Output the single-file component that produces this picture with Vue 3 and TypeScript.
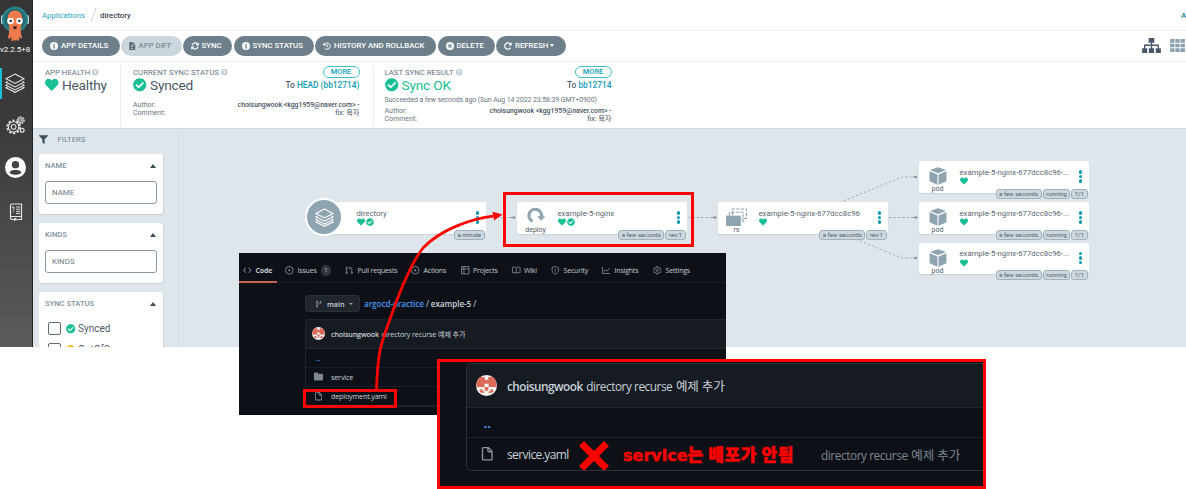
<script setup lang="ts">
import { h, type FunctionalComponent } from 'vue'

interface Glyph {
  box: string
  fill?: string
  line?: string
  width?: number
}

const glyphs: Record<string, Glyph> = {
  heart: { box: '0 0 512 512', fill: 'M462.3 62.6C407.5 15.9 326 24.3 275.7 76.2L256 96.5l-19.7-20.3C186.1 24.3 104.5 15.9 49.7 62.6c-62.8 53.6-66.1 149.8-9.9 207.9l193.5 199.8c12.5 12.9 32.8 12.9 45.3 0l193.5-199.8c56.3-58.1 53-154.3-9.8-207.9z' },
  check: { box: '0 0 512 512', fill: 'M504 256c0 136.967-111.033 248-248 248S8 392.967 8 256 119.033 8 256 8s248 111.033 248 248zM227.314 387.314l184-184c6.248-6.248 6.248-16.379 0-22.627l-22.627-22.627c-6.248-6.249-16.379-6.249-22.628 0L216 308.118l-70.059-70.059c-6.248-6.248-16.379-6.248-22.628 0l-22.627 22.627c-6.248 6.248-6.248 16.379 0 22.627l104 104c6.249 6.249 16.379 6.249 22.628.001z' },
  info: { box: '0 0 16 16', fill: 'M8 0a8 8 0 1 0 0 16A8 8 0 0 0 8 0zM6.8 3h2.6v2.4H6.800zM6 6.700h3.400v4.600h1v1.700H6v-1.700h1V8.400H6z' },
  question: { box: '0 0 16 16', fill: 'M8 0a8 8 0 1 0 0 16A8 8 0 0 0 8 0zM7 11h2v2H7zM5 6a3 3 0 1 1 4.200 2.700L9 10H7V8C7 7 9 7 9 6a1 1 0 0 0-2 0z' },
  diff: { box: '0 0 12 16', fill: 'M1 0h6v5h5v10a1 1 0 0 1-1 1H1a1 1 0 0 1-1-1V1a1 1 0 0 1 1-1zM8 0l4 4H8zM5 6v1.500H3.500V9H5v1.500h1.500V9H8V7.500H6.500V6zM3.500 12v1.400H8V12z' },
  sync: { box: '0 0 16 16', line: 'M2 6.500A6.300 6.300 0 0 1 13 4.200M14 9.500A6.300 6.300 0 0 1 3 11.800', fill: 'M15.500 .5v6.300H9.200zM.5 15.500V9.200h6.300z', width: 2.3 },
  history: { box: '0 0 16 16', line: 'M2.800 4.800A6.300 6.300 0 1 1 3 12M8 4.500V8.500l2.600 1.800', fill: 'M.5 .8v6.200h6.200z', width: 2 },
  remove: { box: '0 0 16 16', fill: 'M8 0a8 8 0 1 0 0 16A8 8 0 0 0 8 0zM5.800 4.200 8 6.400l2.200-2.200 1.600 1.600L9.600 8l2.200 2.200-1.600 1.600L8 9.600l-2.200 2.200-1.600-1.600L6.400 8 4.200 5.800z' },
  redo: { box: '0 0 16 16', line: 'M13 4.600A6.300 6.300 0 1 0 13.200 11.500', fill: 'M15.500 .5v6.500H9z', width: 2.4 },
  funnel: { box: '0 0 16 16', fill: 'M.7 0h14.600c.7 0 1 .8.500 1.300L10 7.300V16l-4-3V7.300L.2 1.300C-.3.800 0 0 .7 0z' },
  tree: { box: '0 0 20 16', fill: 'M7 0h6v5H7zM0 11h5.500v5H0zM7.250 11h5.500v5h-5.500zM14.500 11H20v5h-5.500zM9.300 5h1.400v2h7.300v4h-1.400V8.400H10.700V11H9.300V8.400H3.400V11H2V7h7.300z' },
  grid: { box: '0 0 17 15', fill: 'M0 0h5v4.200H0zM6 0h5v4.200H6zM12 0h5v4.200h-5zM0 5.400h5v4.200H0zM6 5.400h5v4.200H6zM12 5.400h5v4.200h-5zM0 10.800h5V15H0zM6 10.800h5V15H6zM12 10.800h5V15h-5z' },
  layers: { box: '0 0 20 20', line: 'M10 1 19 5.700 10 10.500 1 5.700ZM2.500 8.400 1 9.200l9 4.700 9-4.700-1.500-.8M2.500 11.400 1 12.200l9 4.700 9-4.700-1.500-.8M2.500 14 1 14.700l9 4.600 9-4.600-1.500-.7', width: 1.1 },
  code: { box: '0 0 16 16', fill: 'M4.720 3.220a.75.75 0 011.060 1.060L2.060 8l3.720 3.720a.75.75 0 11-1.060 1.060L.47 8.530a.75.75 0 010-1.060l4.250-4.250zm6.560 0a.75.75 0 10-1.060 1.060L13.940 8l-3.720 3.720a.75.75 0 101.060 1.060l4.250-4.250a.75.75 0 000-1.060l-4.250-4.250z' },
  issue: { box: '0 0 16 16', line: 'M8 .8a7.200 7.200 0 1 0 0 14.400A7.200 7.200 0 0 0 8 .8z', fill: 'M8 6.300a1.700 1.700 0 1 0 0 3.400 1.700 1.700 0 0 0 0-3.400z', width: 1.5 },
  pull: { box: '0 0 16 16', line: 'M3.200 5v6M3.200 1.800a1.500 1.500 0 1 0 0 3 1.500 1.500 0 0 0 0-3zM3.200 11.200a1.500 1.500 0 1 0 0 3 1.500 1.500 0 0 0 0-3zM12.800 11.200a1.500 1.500 0 1 0 0 3 1.500 1.500 0 0 0 0-3zM12.800 11V5.500a2 2 0 0 0-2-2H8M10 1 7.600 3.500 10 6', width: 1.5 },
  play: { box: '0 0 16 16', line: 'M8 .8a7.200 7.200 0 1 0 0 14.400A7.200 7.200 0 0 0 8 .8z', fill: 'M6.300 5 11.200 8l-4.900 3z', width: 1.5 },
  table: { box: '0 0 16 16', line: 'M1 1h14v14H1zM1 5.500h14M5.500 1v14', width: 1.5 },
  book: { box: '0 0 16 16', line: 'M8 3.500C7 2.300 6 2 4.500 2H.8v10.500h4C6.500 12.500 7.300 13 8 14c.7-1 1.500-1.500 3.200-1.500h4V2h-3.700C10 2 9 2.300 8 3.500zM8 3.500V14', width: 1.4 },
  shield: { box: '0 0 16 16', line: 'M8 .8 14 2.800V7.500c0 3.800-2.200 6.200-6 7.700-3.800-1.500-6-3.900-6-7.700V2.800zM8 4.500V8.500M8 10v1.600', width: 1.5 },
  graph: { box: '0 0 16 16', line: 'M1 1.500V14h14.500M3.500 10.500 6.500 7l3 2.500 5-5.500', width: 1.5 },
  gear: { box: '0 0 16 16', line: 'M6.600 1h2.800l.5 2 1.500.8 2-.6 1.500 2.500L13.500 7.200v1.600l1.400 1.500-1.500 2.500-2-.6-1.500.8-.5 2H6.600l-.5-2-1.500-.8-2 .6-1.500-2.500 1.400-1.500V7.200L1.100 5.700l1.500-2.500 2 .6L6.100 3zM8 5.700a2.300 2.300 0 1 0 0 4.600 2.300 2.300 0 0 0 0-4.600z', width: 1.4 },
  branch: { box: '0 0 16 16', fill: 'M11.750 2.500a.75.75 0 100 1.500.75.75 0 000-1.500zm-2.250.75a2.250 2.250 0 113 2.122V6A2.500 2.500 0 0110 8.500H6a1 1 0 00-1 1v1.128a2.251 2.251 0 11-1.500 0V5.372a2.250 2.250 0 111.500 0v1.836A2.492 2.492 0 016 7h4a1 1 0 001-1v-.628A2.250 2.250 0 019.500 3.250zM4.250 12a.75.75 0 100 1.500.75.75 0 000-1.500zM3.500 3.250a.75.75 0 111.500 0 .75.75 0 01-1.500 0z' },
  file: { box: '0 0 16 16', fill: 'M3.750 1.500a.25.25 0 00-.25.25v11.500c0 .138.112.25.25.25h8.500a.25.25 0 00.25-.25V6H9.750A1.750 1.750 0 018 4.250V1.500H3.750zm5.750.56v2.190c0 .138.112.25.25.25h2.190L9.500 2.060zM2 1.750C2 .784 2.784 0 3.750 0h5.086c.464 0 .909.184 1.237.513l3.414 3.414c.329.328.513.773.513 1.237v8.086A1.750 1.750 0 0112.250 15h-8.500A1.750 1.750 0 012 13.250V1.750z' },
  folder: { box: '0 0 16 16', fill: 'M1.700 1h4.500l1.700 2h6.400c1 0 1.700.8 1.700 1.700v8.600c0 1-.8 1.700-1.700 1.700H1.700C.8 15 0 14.200 0 13.300V2.700C0 1.800.8 1 1.700 1z' },
  deploy: { box: '0 0 20 20', line: 'M6.200 14.800A7 7 0 1 1 16 10', fill: 'M11.200 9.300H20.300L15.800 14.300z', width: 3.6 },
  cube: { box: '0 0 20 20', fill: 'M10 .3 19 3.400 10 6.900 1 3.400zM.6 4.800 9.400 8.200V19.800L.6 15.800zM19.400 4.800 10.600 8.200V19.800l8.800-4z' }
}

const Icon: FunctionalComponent<{ name: string }> = (props) => {
  const g = glyphs[props.name]
  return h('svg', { viewBox: g.box, class: 'icon' }, [
    g.fill ? h('path', { d: g.fill, fill: 'currentColor', 'fill-rule': 'evenodd' }) : null,
    g.line ? h('path', { d: g.line, fill: 'none', stroke: 'currentColor', 'stroke-width': g.width }) : null
  ])
}
Icon.props = ['name']

const Avatar: FunctionalComponent = () =>
  h('svg', { viewBox: '0 0 20 20', class: 'ava' }, [
    h('circle', { cx: 10, cy: 10, r: 10, fill: '#f5f2f0' }),
    h('path', {
      d: 'M4 2H8.300V4.600H11.700V2H16A10 10 0 0 1 19.400 11.500H12V8.300H8V11.500H.6A10 10 0 0 1 4 2zM8.300 11.500H11.700V15H8.300zM4 13.500H6.200V15.500H8V16.800H4.500L2.800 14.800H4zM16 13.500H13.800V15.500H12V16.800H15.500L17.200 14.800H16z',
      fill: '#db6a58'
    })
  ])

const buttons = [
  { icon: 'info', label: 'APP DETAILS', cls: 'b-details' },
  { icon: 'diff', label: 'APP DIFF', cls: 'b-diff' },
  { icon: 'sync', label: 'SYNC', cls: 'b-sync' },
  { icon: 'info', label: 'SYNC STATUS', cls: 'b-status' },
  { icon: 'history', label: 'HISTORY AND ROLLBACK', cls: 'b-history' },
  { icon: 'remove', label: 'DELETE', cls: 'b-delete' },
  { icon: 'redo', label: 'REFRESH', cls: 'b-refresh' }
]

const nodes = [
  { cls: 'n-app', kind: 'app', name: 'directory', synced: true, tags: ['a minute'] },
  { cls: 'n-deploy', kind: 'deploy', name: 'example-5-nginx', synced: true, tags: ['a few seconds', 'rev:1'] },
  { cls: 'n-rs', kind: 'rs', name: 'example-5-nginx-677dcc8c96', synced: false, tags: ['a few seconds', 'rev:1'] },
  { cls: 'n-pod1', kind: 'pod', name: 'example-5-nginx-677dcc8c96-...', synced: false, tags: ['a few seconds', 'running', '1/1'] },
  { cls: 'n-pod2', kind: 'pod', name: 'example-5-nginx-677dcc8c96-...', synced: false, tags: ['a few seconds', 'running', '1/1'] },
  { cls: 'n-pod3', kind: 'pod', name: 'example-5-nginx-677dcc8c96-...', synced: false, tags: ['a few seconds', 'running', '1/1'] }
]

const tabs = [
  { icon: 'code', label: 'Code' },
  { icon: 'issue', label: 'Issues', count: 1 },
  { icon: 'pull', label: 'Pull requests' },
  { icon: 'play', label: 'Actions' },
  { icon: 'table', label: 'Projects' },
  { icon: 'book', label: 'Wiki' },
  { icon: 'shield', label: 'Security' },
  { icon: 'graph', label: 'Insights' },
  { icon: 'gear', label: 'Settings' }
]
</script>

<template>
  <div class="stage">
    <div class="argo">
      <aside class="side">
        <svg class="logo" viewBox="0 0 33 42">
          <rect x="1" y="15" width="3" height="9" rx="1.500" fill="#b9dbe8" />
          <rect x="26" y="15" width="3" height="9" rx="1.500" fill="#b9dbe8" />
          <circle cx="15" cy="19.500" r="13" fill="#2b7f86" />
          <circle cx="15" cy="19.500" r="10.500" fill="#20686f" />
          <path d="M15 10.500c-5 0-7.500 4-7.300 8.500.2 5 2 7 1.500 12.500-.1 3-1.500 5-1 7 2 .5 2.500-.5 3-2l.4 4.500c1.600.8 2.300-.5 2.400-1.700.6 2 2.300 2 2.700-.1.500 2 2 1.800 2.500.6l-.1-3.600c.8 2 1.800 2.600 3 1.800-1-3-1.400-5.500-1.300-8 0-4 1.600-7 1.600-11 0-5-2.900-8.500-7.400-8.500z" fill="#ef7b4d" />
          <circle cx="10.500" cy="21" r="3.300" fill="#fff" />
          <circle cx="19.500" cy="21" r="3.300" fill="#fff" />
          <circle cx="10.700" cy="21" r="1.200" fill="#222" />
          <circle cx="19.300" cy="21" r="1.200" fill="#222" />
          <path d="M13 26.500c.5 3.500 3.500 3.500 4 0z" fill="#2a1512" />
        </svg>
        <div class="version">v2.2.5+8</div>
        <div class="side-item active"><Icon name="layers" /></div>
        <svg class="gears" viewBox="0 0 20 20" fill="none" stroke="#dcdcdc">
          <circle cx="8" cy="11.500" r="6.700" stroke-width="2" stroke-dasharray="2.400 1.800" />
          <circle cx="8" cy="11.500" r="5.500" stroke-width="1.200" />
          <circle cx="8" cy="11.500" r="2.500" stroke-width="1.200" />
          <circle cx="15.500" cy="4.500" r="3.500" stroke-width="1.500" stroke-dasharray="1.600 1" />
          <circle cx="15.500" cy="4.500" r="2.500" />
          <circle cx="15.500" cy="4.500" r=".9" />
          <circle cx="17" cy="15" r="2" stroke-width="1.400" />
        </svg>
        <svg class="user" viewBox="0 0 20 20">
          <circle cx="10" cy="10" r="10" fill="#fff" />
          <circle cx="10" cy="7.300" r="3.500" fill="#444" />
          <path d="M4.300 15.200c1-2.800 3-2.900 5.700-2.900s4.700.1 5.700 2.900c-3 2.200-8.400 2.200-11.400 0z" fill="#444" />
        </svg>
        <svg class="docs" viewBox="0 0 14 18" fill="none" stroke="#e6e6e6">
          <path d="M1.500 15V2.500A1.500 1.500 0 0 1 3 1h9.500v12.500H3a1.500 1.500 0 0 0 0 3h2M8 16.500h4.500v-3" stroke-width="1.200" />
          <path d="M7 4h4M7 6.200h4M7 8.400h4M7 10.500h4M3.300 5c0-1.700 2-1.300 2 0 0 .9-1 .9-1 2M4.300 8v1" stroke-width=".9" />
          <path d="M5 15.200h2.500V18l-1.200-1L5 18z" fill="#fff" stroke="none" />
        </svg>
      </aside>

      <main class="main">
        <header class="crumbs">
          <a>Applications</a>
          <svg class="slash" viewBox="0 0 7 14"><path d="M6 0 1 14" stroke="#ccd6dc" fill="none" /></svg>
          <b>directory</b>
          <span class="corner">A</span>
        </header>

        <div class="toolbar">
          <button v-for="b in buttons" :key="b.label" :class="['btn', b.cls]">
            <Icon :name="b.icon" /><span>{{ b.label }}</span><i v-if="b.icon === 'redo'" class="caret" />
          </button>
          <div class="views"><Icon name="tree" class="v-tree" /><Icon name="grid" class="v-grid" /></div>
        </div>

        <section class="status">
          <div class="panel p-health">
            <div class="cap">APP HEALTH <Icon name="question" /></div>
            <div class="big"><Icon name="heart" /><span>Healthy</span></div>
          </div>
          <div class="panel p-current">
            <div class="cap">CURRENT SYNC STATUS <Icon name="question" /><span class="more">MORE</span></div>
            <div class="big"><Icon name="check" /><span>Synced</span><span class="to">To <a>HEAD (bb12714)</a></span></div>
            <div class="meta first"><span>Author:</span><span class="who">choisungwook &lt;kgg1959@naver.com&gt; -</span></div>
            <div class="meta"><span>Comment:</span><span class="who">fix: 육자</span></div>
          </div>
          <div class="panel p-last">
            <div class="cap">LAST SYNC RESULT <Icon name="question" /><span class="more">MORE</span></div>
            <div class="big ok"><Icon name="check" /><span>Sync OK</span><span class="to">To <a>bb12714</a></span></div>
            <div class="when">Succeeded a few seconds ago (Sun Aug 14 2022 23:58:39 GMT+0900)</div>
            <div class="meta"><span>Author:</span><span class="who">choisungwook &lt;kgg1959@naver.com&gt; -</span></div>
            <div class="meta"><span>Comment:</span><span class="who">fix: 육자</span></div>
          </div>
        </section>

        <div class="body">
          <div class="filters">
            <div class="f-title"><Icon name="funnel" /><span>FILTERS</span></div>
            <div v-for="f in ['NAME', 'KINDS']" :key="f" class="f-card">
              <div class="f-head"><span>{{ f }}</span><i class="up" /></div>
              <div class="f-input">{{ f }}</div>
            </div>
            <div class="f-card tall">
              <div class="f-head"><span>SYNC STATUS</span><i class="up" /></div>
              <div class="f-row"><i class="box" /><Icon name="check" /><span>Synced</span></div>
              <div class="f-row"><i class="box" /><i class="warn" /><span>OutOfSync</span></div>
            </div>
          </div>

          <div class="canvas">
            <svg class="edges" viewBox="0 0 1007 219">
              <g fill="none" stroke="#a3afb7" stroke-width="1" stroke-dasharray="2.400 2">
                <path d="M308 88.500H337M509 88.500H538M710 88.500H739" />
                <path d="M624 88.500 723 48H739M624 88.500 723 129H739" />
              </g>
              <g fill="#8c99a2">
                <path d="m331 88.500 5-1.500v3zM532 88.500l5-1.500v3zM733 88.500l5-1.500v3zM733 48l5-1.500v3zM733 129l5-1.500v3z" />
              </g>
            </svg>
            <div v-for="n in nodes" :key="n.cls" :class="['node', n.cls]">
              <div v-if="n.kind === 'app'" class="disc"><Icon name="layers" /></div>
              <div v-else class="kind">
                <Icon v-if="n.kind === 'deploy'" name="deploy" />
                <Icon v-else-if="n.kind === 'pod'" name="cube" />
                <svg v-else class="icon rs-icon" viewBox="0 0 24 20">
                  <path d="M8 7.500V1h14.500v10H17" fill="none" stroke="#8fa4b1" stroke-width="1.200" stroke-dasharray="3.500 1.500" />
                  <path d="M4.500 8V4.500H19V15h-2" fill="none" stroke="#8fa4b1" stroke-width="1.200" stroke-dasharray="3.500 1.500" />
                  <path d="M1 8h15.500v11H1z" fill="#8fa4b1" />
                </svg>
                <span>{{ n.kind }}</span>
              </div>
              <div class="info">
                <span class="nm">{{ n.name }}</span>
                <span class="st"><Icon name="heart" /><Icon v-if="n.synced" name="check" /></span>
              </div>
              <div class="dots"><i /><i /><i /></div>
              <div class="tags"><span v-for="t in n.tags" :key="t">{{ t }}</span></div>
            </div>
          </div>
        </div>
      </main>
    </div>

    <div class="repo">
      <nav class="tabs">
        <div v-for="t in tabs" :key="t.label" :class="['tab', { on: t.icon === 'code' }]">
          <Icon :name="t.icon" /><span>{{ t.label }}</span><em v-if="t.count">{{ t.count }}</em>
        </div>
      </nav>
      <div class="path">
        <div class="br"><Icon name="branch" /><span>main</span><i class="caret" /></div>
        <div class="trail"><a>argocd-practice</a> / <b>example-5</b> /</div>
      </div>
      <div class="files">
        <div class="commit">
          <Avatar />
          <b>choisungwook</b><span>directory recurse 예제 추가</span>
        </div>
        <div class="f up-dir">..</div>
        <div class="f"><Icon name="folder" /><span>service</span></div>
        <div class="f"><Icon name="file" /><span>deployment.yaml</span></div>
      </div>
    </div>

    <div class="mark m-node" />
    <div class="mark m-file" />
    <svg class="arrow" viewBox="0 0 1186 489">
      <path d="M376.500 389C378 350 381 344 389 322C400 290 412 262 423 248C440 230 470 219 493 216.200" fill="none" stroke="#f00" stroke-width="2.800" />
      <path d="M502.500 214.500 492.500 211.700 494 220.500z" fill="#f00" />
    </svg>

    <div class="inset">
      <div class="sheet">
        <div class="commit">
          <Avatar />
          <b>choisungwook</b><span>directory recurse <span class="ko">예제 추가</span></span>
        </div>
        <div class="row up-dir">..</div>
        <div class="row">
          <Icon name="file" />
          <span class="fname">service.yaml</span>
          <svg class="cross" viewBox="0 0 30 30"><path d="M2.500 2.500 27.500 27.500M27.500 2.500 2.500 27.500" stroke="#f00" stroke-width="7" /></svg>
          <strong><span class="lat">service</span>는 배포가 안됨</strong>
          <span class="msg">directory recurse <span class="ko">예제 추가</span></span>
        </div>
      </div>
    </div>
  </div>
</template>

<style>
body { background: #fff; }
</style>

<style scoped>
.stage { position: relative; width: 1186px; height: 489px; overflow: hidden; background: #fff; font-family: Roboto, "Noto Sans CJK KR", sans-serif; font-size: 7.75px; color: #495763; }
.icon { display: block; flex: none; overflow: visible; }
i { font-style: normal; }
.argo { display: flex; height: 347px; overflow: hidden; }

.side { width: 33px; box-sizing: border-box; border-right: 1px solid #222; flex: none; background: linear-gradient(#353535, #3c3c3c 40%, #5b5b5b); display: flex; flex-direction: column; align-items: center; overflow: hidden; }
.logo { width: 33px; height: 42px; flex: none; }
.version { height: 14px; line-height: 16px; font-size: 7.900px; color: #fff; width: 30px; overflow: hidden; white-space: nowrap; font-weight: 400; align-self: flex-start; }
.side-item { width: 32px; height: 31px; margin-top: 12px; box-sizing: border-box; padding: 5px 0 0 5px; color: #e4e4e4; }
.side-item.active { border-left: 2px solid #18bcd4; padding-left: 3px; }
.side-item .icon { width: 20px; height: 20px; }
.gears { width: 19px; height: 19px; margin: 17px 2px 0 0; flex: none; }
.user { width: 21px; height: 21px; margin: 22px 2px 0 0; flex: none; }
.docs { width: 14px; height: 18px; margin: 25px 1px 0 0; flex: none; }

.main { flex: 1; min-width: 0; display: flex; flex-direction: column; }
.crumbs { height: 30px; border-bottom: 1px solid #eef1f4; display: flex; align-items: center; padding-left: 9px; background: #fff; }
.crumbs a { color: #1fa3b8; width: 47.500px; }
.slash { width: 7px; height: 14px; margin-right: 3.500px; }
.crumbs b { font-weight: 500; color: #363c4a; font-size: 7.800px; }
.corner { margin-left: auto; width: 5px; overflow: hidden; color: #1b7d93; font-weight: 500; font-size: 8px; }
.toolbar { height: 30px; border-bottom: 1px solid #eef1f4; display: flex; align-items: center; padding-left: 9px; }
.btn { height: 20.500px; border: 0; border-radius: 11px; background: #6d7f8b; color: #fff; font: 500 7.800px Roboto, sans-serif; display: flex; align-items: center; padding: 0 0 1px 8px; margin: 0 1.500px 0 0; gap: 3px; white-space: nowrap; box-sizing: border-box; flex: none; }
.btn .icon { width: 8px; height: 8px; }
.b-details { width: 77.500px; }
.b-diff { width: 60.500px; background: #ccd6dd; color: #7b8a94; margin-right: 1px; }
.b-diff .icon { width: 6.500px; color: #5b6b76; }
.b-sync { width: 49.500px; }
.b-status { width: 80px; }
.b-history { width: 121px; }
.b-delete { width: 57px; }
.b-refresh { width: 70px; }
.caret { border: 2.500px solid transparent; border-top: 3px solid currentColor; border-bottom: 0; width: 0; height: 0; margin-left: -1px; }
.views { margin-left: auto; display: flex; align-items: center; gap: 9px; padding: 0 1px 1px 0; color: #46586a; }
.v-tree { width: 19px; height: 15px; }
.v-grid { width: 15px; height: 13px; color: #8ba0b1; }

.status { height: 66.500px; display: flex; box-sizing: border-box; padding: 3px 0 3px 0; background: #fff; }
.panel { box-sizing: border-box; border-right: 1.500px solid #e9eef2; line-height: 9px; padding-top: 2px; }
.p-health { width: 88px; padding-left: 12px; }
.p-current { width: 252.500px; padding: 2px 13px 0 12px; }
.p-last { width: 248px; border: 0; padding: 2px 10px 0 11px; }
.cap { display: flex; align-items: center; height: 10px; color: #67757f; font-size: 7.800px; white-space: nowrap; gap: 2px; }
.cap .icon { width: 6.500px; height: 6.500px; color: #c3d0d8; }
.more { margin-left: auto; border: 1px solid #3fc0cf; border-radius: 7px; width: 37px; height: 12px; box-sizing: border-box; color: #0fa3b8; font-weight: 500; font-size: 7.500px; text-align: center; line-height: 10.500px; }
.big { display: flex; align-items: center; height: 16px; font-size: 13.700px; color: #495763; gap: 3.500px; letter-spacing: -.2px; margin-bottom: 1px; }
.big .icon { width: 13.500px; height: 13.500px; color: #18be94; }
.big.ok { color: #18be94; }
.to { margin-left: auto; font-size: 8.350px; font-weight: 500; letter-spacing: 0; color: #4f5c67; }
.to a { color: #109db3; }
.meta { display: flex; justify-content: space-between; height: 8px; line-height: 8px; font-size: 7px; color: #6a767f; white-space: nowrap; }
.meta.first { margin-top: 8.200px; }
.who { font-size: 6.850px; color: #47525c; font-weight: 500; }
.meta:last-child .who { font-weight: 400; font-size: 7.200px; }
.when { height: 12.500px; line-height: 13px; font-size: 6.950px; color: #6a767f; white-space: nowrap; letter-spacing: -.08px; }

.body { flex: 1; display: flex; background: #dee6eb; border-top: 1px solid #cfd8de; margin-top: -1px; min-height: 0; }
.filters { width: 146px; box-sizing: border-box; padding: 0 15px 0 6px; border-right: 1px solid #d5dee4; flex: none; overflow: hidden; color: #748592; }
.f-title { height: 25px; display: flex; align-items: center; gap: 9.500px; padding-bottom: 3px; box-sizing: border-box; }
.f-title .icon { width: 9px; height: 9.500px; color: #3c4c59; }
.f-card { background: #fff; border-radius: 3px; box-shadow: .5px 1px 1px #c9d2d8; height: 60px; margin-bottom: 9px; box-sizing: border-box; padding: 5.500px 6px 0; }
.f-card.tall { height: 120px; }
.f-head { height: 12px; display: flex; align-items: center; justify-content: space-between; font-weight: 500; font-size: 7.600px; color: #7f929e; padding-right: 1px; }
.up { border: 3.500px solid transparent; border-bottom: 4px solid #3c4c59; border-top: 0; margin: 2px 0 0; }
.f-input { margin-top: 9.500px; height: 23px; box-sizing: border-box; border: 1px solid #8a9aa5; border-radius: 3px; line-height: 21px; padding-left: 6px; color: #6b7a85; font-size: 7.900px; }
.f-row { display: flex; align-items: center; height: 21.500px; padding-left: 3px; font-size: 10px; color: #4f5c67; }
.f-head + .f-row { margin-top: 8.700px; }
.box { width: 11px; height: 11px; border: 1px solid #5f6b75; border-radius: 2px; margin-right: 4.500px; flex: none; }
.f-row .icon, .warn { width: 9.500px; height: 9.500px; color: #18be94; margin-right: 3px; }
.warn { background: #f4c030; border-radius: 50%; }

.canvas { position: relative; flex: 1; }
.edges { position: absolute; left: 0; top: 0; width: 1007px; height: 219px; }
.node { position: absolute; width: 170px; height: 31.500px; background: #fff; border-radius: 2px; box-shadow: 0 1px 1px #c9d3d9; display: flex; }
.n-app { left: 137px; top: 73.500px; }
.n-deploy { left: 338px; top: 73.500px; }
.n-rs { left: 539px; top: 73.500px; }
.n-pod1 { left: 740px; top: 32.500px; }
.n-pod2 { left: 740px; top: 73.500px; }
.n-pod3 { left: 740px; top: 114px; }
.disc { position: absolute; left: -11px; top: -4px; width: 34px; height: 34px; border: 2px solid #fff; border-radius: 50%; background: #8fa4b1; color: #fff; display: flex; align-items: center; justify-content: center; }
.disc .icon { width: 19px; height: 19px; }
.kind { width: 37px; display: flex; flex-direction: column; align-items: center; padding-top: 6px; color: #8fa4b1; }
.kind .icon { width: 18px; height: 18px; }
.kind .rs-icon { width: 23px; height: 19px; margin-bottom: -1px; }
.kind span { color: #4f5c67; font-size: 7px; line-height: 8px; }
.info { position: absolute; left: 40.500px; top: 6.500px; white-space: nowrap; }
.nm { display: block; font-size: 7.750px; line-height: 9px; color: #5a6670; }
.st { display: flex; gap: 1px; margin-top: .5px; color: #18be94; }
.st .icon { width: 8px; height: 8px; }
.dots { position: absolute; right: 7px; top: 9px; display: flex; flex-direction: column; gap: 1px; }
.dots i { width: 3.500px; height: 3.500px; border-radius: 50%; background: #0d9bb0; }
.tags { position: absolute; right: 1.500px; top: 27.500px; display: flex; gap: 1px; }
.tags span { box-sizing: border-box; height: 10px; border: 1px solid #9fb1bc; border-radius: 3px; background: #ccd7de; color: #55626c; font-size: 6.100px; line-height: 7.500px; padding: 0 2.500px; white-space: nowrap; }

.repo { position: absolute; left: 239px; top: 253px; width: 487px; height: 162px; background: #0d1117; color: #c9d1d9; font-family: "Open Sans", "Noto Sans CJK KR", sans-serif; font-size: 7px; overflow: hidden; }
.tabs { display: grid; grid-template-columns: 46px 60px 66px 49.500px 51px 39.500px 51px 51px 50px; height: 29px; border-bottom: 1px solid #1b2027; }
.tab { display: flex; align-items: center; gap: 4px; color: #c3cad1; white-space: nowrap; letter-spacing: -.18px; height: 35px; }
.tab .icon { width: 8.500px; height: 8.500px; color: #8b949e; }
.tab.on { font-weight: 700; position: relative; padding-left: 4px; }
.tab.on::after { content: ""; position: absolute; left: 0; width: 38px; top: 28px; height: 2px; background: #c8634f; }
.tab em { font-style: normal; background: #30363d; border-radius: 6px; width: 10.500px; height: 10.500px; line-height: 10px; text-align: center; font-size: 6px; }
.path { display: flex; align-items: center; height: 17px; margin: 12px 0 7px 66px; }
.br { width: 55px; height: 17px; border: 1px solid #2a3037; border-radius: 3px; background: #21262d; display: flex; align-items: center; padding-left: 8.500px; box-sizing: border-box; font-weight: 600; gap: 5px; font-size: 7.300px; letter-spacing: -.1px; }
.br .icon { width: 7.500px; height: 8px; color: #8b949e; }
.br .caret { border-width: 2px; border-top-width: 2.500px; margin: 0; color: #9aa2aa; border-bottom: 0; }
.trail { margin-left: 4px; font-size: 8.200px; letter-spacing: -.1px; white-space: nowrap; }
.trail a { color: #4a94ee; font-weight: 600; }
.trail b { font-weight: 600; }
.files { margin-left: 66px; border: 1px solid #21262d; border-right: 0; border-radius: 3px 0 0 0; }
.commit { display: flex; align-items: center; background: #161b22; border-bottom: 1.500px solid #23282f; white-space: nowrap; }
.repo .commit { height: 27.500px; padding-left: 6px; letter-spacing: -.1px; font-size: 7.100px; }
.ava { flex: none; }
.repo .ava { width: 13px; height: 13px; margin-right: 6px; }
.repo .commit b { font-weight: 600; margin-right: 2.500px; }
.f { display: flex; align-items: center; border-bottom: 1px solid #191e25; padding-left: 8px; box-sizing: border-box; height: 19.300px; letter-spacing: -.17px; font-size: 7.200px; }
.f .icon { width: 9px; height: 9px; color: #7d8792; margin-right: 8px; }
.up-dir { color: #4a94ee; font-weight: 700; }
.f.up-dir { padding-left: 10px; letter-spacing: .3px; }

.mark { position: absolute; border: 3px solid #f00; box-sizing: border-box; }
.m-node { left: 503px; top: 192px; width: 191px; height: 55px; }
.m-file { left: 303px; top: 389px; width: 94px; height: 19px; }
.arrow { position: absolute; left: 0; top: 0; width: 1186px; height: 489px; }

.inset { position: absolute; left: 437px; top: 359px; width: 549px; height: 130px; box-sizing: border-box; border: 3px solid #f00; background: #0d1117; padding: 1px 0 0 26px; color: #c9d1d9; font-family: "Open Sans", "Noto Sans CJK KR", sans-serif; font-size: 12px; overflow: hidden; }
.sheet { border: 1px solid #2b3138; border-right: 0; border-radius: 5px 0 0 5px; overflow: hidden; box-sizing: border-box; height: 107.500px; }
.inset .commit { height: 43px; padding-left: 9px; font-size: 11.800px; letter-spacing: -.45px; }
.inset .ava { width: 21px; height: 21px; margin-right: 10px; }
.inset .commit b { font-weight: 600; margin-right: 3.500px; letter-spacing: -.52px; }
.ko { font-size: 12.500px; letter-spacing: -.1px; margin-left: 1px; }
.row { height: 32px; display: flex; align-items: center; white-space: nowrap; letter-spacing: -.2px; }
.row.up-dir { height: 30px; border-bottom: 1px solid #21262d; padding-left: 16.500px; box-sizing: border-box; font-size: 13px; letter-spacing: 0; }
.row .icon { width: 14.500px; height: 14.500px; color: #8b949e; margin: 0 12.500px 0 13px; }
.fname { width: 69px; letter-spacing: -.6px; }
.cross { width: 30px; height: 30px; margin: 3px 14px 0 3px; flex: none; }
.row strong { width: 198px; flex: none; color: #f00; font: 900 17px "Noto Sans CJK KR", sans-serif; letter-spacing: .6px; -webkit-text-stroke: .5px #f00; line-height: 20px; }
.lat { font: 700 16px "DejaVu Sans", sans-serif; letter-spacing: 0; }
.msg { color: #7d858e; font-size: 11.800px; letter-spacing: -.42px; }
</style>
